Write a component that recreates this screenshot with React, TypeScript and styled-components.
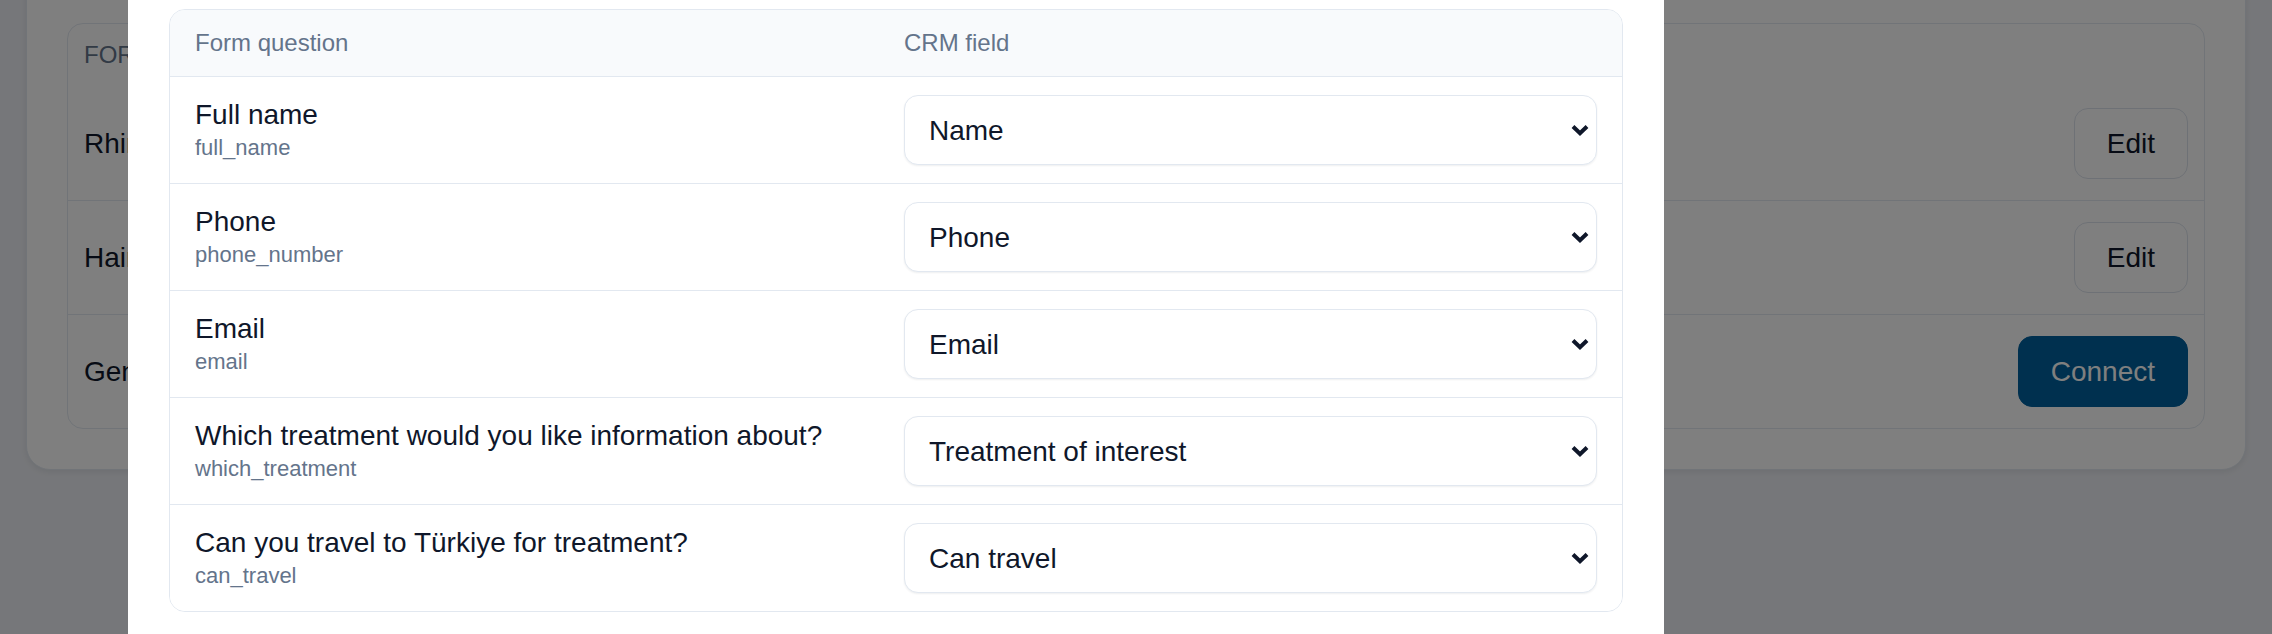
import styled, { createGlobalStyle } from 'styled-components';

const GlobalStyle = createGlobalStyle`
  html, body {
    margin: 0;
    padding: 0;
    background: #edeff4;
    font-family: "Liberation Sans", Arial, sans-serif;
    overflow: hidden;
  }
  * {
    box-sizing: border-box;
  }
`;

/* ---------- page behind the modal ---------- */

const Page = styled.div`
  padding: 0 26px;
  height: 634px;
`;

const Card = styled.div`
  margin-top: -40px;
  background: #fff;
  border: 1px solid #e2e8f0;
  border-radius: 24px;
  padding: 62px 40px 40px;
  box-shadow: 0 2px 6px rgba(15, 23, 42, 0.08);
`;

const FormsBox = styled.div`
  border: 1px solid #e2e8f0;
  border-radius: 16px;
`;

const FormsHead = styled.div`
  height: 62px;
  display: flex;
  align-items: center;
  padding: 0 16px;
  font-size: 24px;
  color: #64748b;
  text-transform: uppercase;
`;

const FormRow = styled.div<{ $first?: boolean }>`
  height: 114px;
  display: flex;
  align-items: center;
  justify-content: space-between;
  padding: 0 16px;
  border-top: 1px solid ${(p) => (p.$first ? 'transparent' : '#e2e8f0')};
  font-size: 28px;
  color: #0f172a;
`;

const Button = styled.button<{ $primary?: boolean }>`
  height: 71px;
  padding: 0 32px;
  border-radius: 14px;
  font-family: inherit;
  font-size: 28px;
  border: 1px solid ${(p) => (p.$primary ? '#00609e' : '#dde3ec')};
  background: ${(p) => (p.$primary ? '#00609e' : '#fff')};
  color: ${(p) => (p.$primary ? '#fff' : '#0f172a')};
`;

/* ---------- modal ---------- */

const Overlay = styled.div`
  position: fixed;
  inset: 0;
  background: rgba(0, 0, 0, 0.5);
  display: flex;
  padding-left: 128px;
`;

const Modal = styled.div`
  width: 1536px;
  height: 100%;
  background: #fff;
  padding: 9px 41px 0;
`;

const MapTable = styled.div`
  border: 1px solid #e2e8f0;
  border-radius: 16px;
  overflow: hidden;
`;

const MapRow = styled.div<{ $head?: boolean }>`
  display: grid;
  grid-template-columns: 709px 1fr;
  align-items: center;
  min-height: ${(p) => (p.$head ? '66px' : '107px')};
  background: ${(p) => (p.$head ? '#f8fafc' : '#fff')};
  & + & {
    border-top: 1px solid #e2e8f0;
  }
`;

const HeadCell = styled.div`
  padding: 0 25px;
  font-size: 24px;
  color: #64748b;
`;

const Cell = styled.div`
  padding: 0 25px;
`;

const Question = styled.div`
  font-size: 28px;
  line-height: 35px;
  color: #0f172a;
`;

const Key = styled.div`
  font-size: 22px;
  line-height: 32px;
  color: #64748b;
`;

const SelectWrap = styled.div`
  position: relative;
`;

const Select = styled.select`
  appearance: none;
  width: 100%;
  height: 70px;
  padding: 0 48px 0 24px;
  border: 1px solid #e2e8f0;
  border-radius: 14px;
  background: #fff;
  box-shadow: 0 1px 2px rgba(15, 23, 42, 0.07);
  font-family: inherit;
  font-size: 28px;
  color: #0f172a;
  outline: none;
`;

const Chevron = styled.svg`
  position: absolute;
  right: 8px;
  top: 50%;
  transform: translateY(-50%);
  pointer-events: none;
`;

const crmFields = ['Name', 'Phone', 'Email', 'Treatment of interest', 'Can travel', 'Notes'];

const mappings = [
  { label: 'Full name', key: 'full_name', field: 'Name' },
  { label: 'Phone', key: 'phone_number', field: 'Phone' },
  { label: 'Email', key: 'email', field: 'Email' },
  { label: 'Which treatment would you like information about?', key: 'which_treatment', field: 'Treatment of interest' },
  { label: 'Can you travel to Türkiye for treatment?', key: 'can_travel', field: 'Can travel' },
];

const forms = [
  { name: 'Rhinoplasty Lead Form', connected: true },
  { name: 'Hair Transplant Lead Form', connected: true },
  { name: 'General Enquiry Form', connected: false },
];

const FieldSelect = ({ value }: { value: string }) => (
  <SelectWrap>
    <Select defaultValue={value}>
      {crmFields.map((f) => (
        <option key={f}>{f}</option>
      ))}
    </Select>
    <Chevron width="18" height="12" viewBox="0 0 18 12">
      <polyline points="2,2.5 9,9.2 16,2.5" fill="none" stroke="#0f172a" strokeWidth="4" />
    </Chevron>
  </SelectWrap>
);

const App = () => {
  return (
    <>
      <GlobalStyle />
      <Page>
        <Card>
          <FormsBox>
            <FormsHead>Form</FormsHead>
            {forms.map((f, i) => (
              <FormRow key={f.name} $first={i === 0}>
                <span>{f.name}</span>
                {f.connected ? <Button>Edit</Button> : <Button $primary>Connect</Button>}
              </FormRow>
            ))}
          </FormsBox>
        </Card>
      </Page>
      <Overlay>
        <Modal>
          <MapTable>
            <MapRow $head>
              <HeadCell>Form question</HeadCell>
              <HeadCell>CRM field</HeadCell>
            </MapRow>
            {mappings.map((m) => (
              <MapRow key={m.key}>
                <Cell>
                  <Question>{m.label}</Question>
                  <Key>{m.key}</Key>
                </Cell>
                <Cell>
                  <FieldSelect value={m.field} />
                </Cell>
              </MapRow>
            ))}
          </MapTable>
        </Modal>
      </Overlay>
    </>
  );
};

export default App;
